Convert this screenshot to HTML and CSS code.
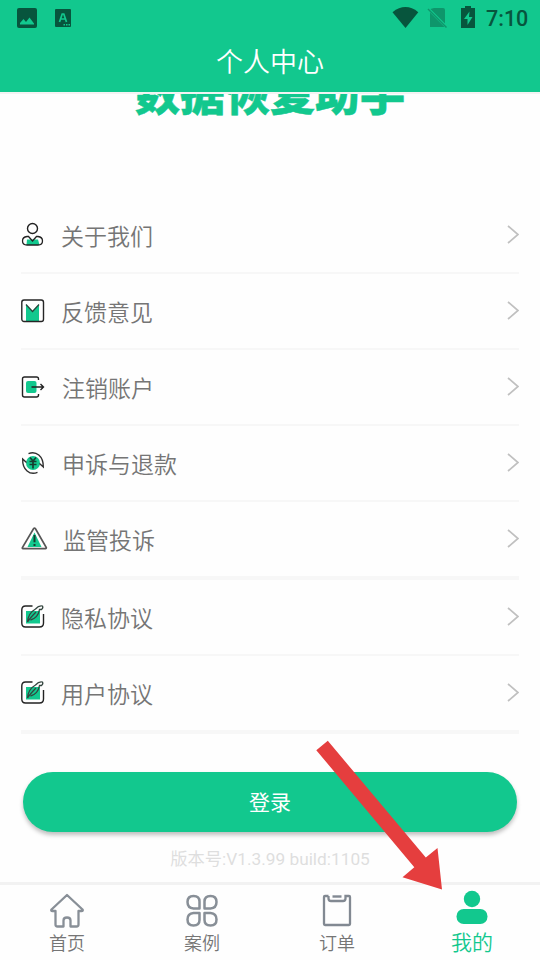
FILE: index.html
```html
<!DOCTYPE html>
<html lang="zh-CN">
<head>
<meta charset="utf-8">
<title>个人中心</title>
<link rel="stylesheet" href="styles.css">
</head>
<body>
<svg class="defs" width="0" height="0">
  <symbol id="chevron" viewBox="0 0 12 20"><path d="M1 1 11 9.500 1 18" fill="none" stroke="#c0c0c0" stroke-width="1.700"/></symbol>
  <symbol id="edit" viewBox="0 0 28 26">
    <rect x="5" y="7" width="14" height="12.500" fill="#12c88e"/>
    <path d="M11.500 2H4.500Q.8 2 .8 6V19Q.8 23 4.500 23H18.500Q22.500 23 22.500 19V10" fill="none" stroke="#222" stroke-width="1.400"/>
    <path d="M6.500 18C7 11 11 7 14.500 5Q18 1 21.500 2Q22.500 4 20.500 5.500L18.500 5.500Q17 14 9.500 16M6.500 18C9 14 12 11 15 8" fill="none" stroke="#34453f" stroke-width="1.300"/>
  </symbol>
</svg>
<div class="phone">
  <header class="header">
    <div class="status">
      <svg width="80" height="36" viewBox="0 0 80 36">
        <rect x="17" y="8" width="20" height="20" rx="2" fill="#07553d"/>
        <path d="M20 24.500V23l3.500-4 2.500 3 3.500-4.500 4.500 6v1z" fill="#12c88e"/>
        <rect x="55" y="9" width="16" height="18" rx="1" fill="#07553d"/>
        <path d="M59.500 22 62.200 14h1.600l2.700 8M60.700 19h4.600" fill="none" stroke="#12c88e" stroke-width="1.700"/>
        <path d="M63.500 24.800h7" stroke="#12c88e" stroke-width="1.500" stroke-dasharray="1.500 1"/>
      </svg>
      <div class="status-right">
        <svg width="90" height="36" viewBox="390 0 90 36">
          <path d="M392.500 12.200Q405.500 2 418.300 12.200L405.500 28z" fill="#07553d"/>
          <path d="M434 8h9q2 0 2 2v13.500L430.500 9zM430 12.500V27h14.500z" fill="#0e966b"/>
          <path d="M428 9l18.500 18.500" stroke="#0e966b" stroke-width="1.500"/>
          <path d="M465 6h6v2h4v20h-14V8h4z" fill="#07553d"/>
          <path d="M469.500 11.500 464 19h3.500v6l5-8H469z" fill="#12c88e"/>
        </svg>
        <span class="clock">7:10</span>
      </div>
    </div>
    <h1 class="title">个人中心</h1>
  </header>
  <main class="content">
    <div class="brand"><span class="brand-name">数据恢复助手</span></div>
    <ul class="menu">
      <li class="row">
        <svg class="icon" viewBox="0 0 28 26"><circle cx="11.500" cy="6.500" r="5" fill="none" stroke="#222" stroke-width="1.400"/><path d="M6 17.500h11l1.500 5.500h-13z" fill="#12c88e"/><path d="M7.500 14.500H6Q1.500 15 1.500 19T6 23H17Q21.500 23 21.500 19T17 14.500H15.500L11.500 19 7.500 14.500Z" fill="none" stroke="#222" stroke-width="1.300"/></svg>
        <span class="label">关于我们</span><svg class="chevron"><use href="#chevron"/></svg>
      </li>
      <li class="row">
        <svg class="icon" viewBox="0 0 28 26"><path d="M5 6.500 11.500 13.500 18 6.500V23H5z" fill="#12c88e"/><rect x=".8" y="2" width="21.700" height="21.500" rx="2.200" fill="none" stroke="#252525" stroke-width="1.400"/><path d="M5 6.500 11.500 13.500 18 6.500" fill="none" stroke="#25463b" stroke-width="1.300"/></svg>
        <span class="label">反馈意见</span><svg class="chevron"><use href="#chevron"/></svg>
      </li>
      <li class="row">
        <svg class="icon" viewBox="0 0 28 26"><rect x="5" y="7" width="10.500" height="12" rx="2" fill="#12c88e"/><path d="M17.500 6V5Q17.500 3 15.500 3H3.500Q1.500 3 1.500 5V21Q1.500 23 3.500 23H15.500Q17.500 23 17.500 21V20M10.500 13H22M19.500 10 22.500 13 19.500 16" fill="none" stroke="#222" stroke-width="1.400"/></svg>
        <span class="label nudge-1">注销账户</span><svg class="chevron"><use href="#chevron"/></svg>
      </li>
      <li class="row">
        <svg class="icon" viewBox="0 0 28 26"><circle cx="12" cy="13" r="7" fill="#12c88e"/><path d="M7.500 3.600C15 .5 22.500 6 22.300 17L18.500 13.500M16.500 22.400C9 25.500 1.200 20 1.700 9L5.500 12.500" fill="none" stroke="#303030" stroke-width="1.400"/><path d="M9 7.500 12 11 15 7.500M12 11V18.500M8.500 11.500h7M8.500 14.500h7" fill="none" stroke="#173d30" stroke-width="1.700"/></svg>
        <span class="label nudge-1">申诉与退款</span><svg class="chevron"><use href="#chevron"/></svg>
      </li>
      <li class="row row-end">
        <svg class="icon" viewBox="0 0 28 26"><path d="M13.500 6.500 20.500 21H6.500z" fill="#12c88e"/><path d="M12.500 2.800Q13.500 1.600 14.500 2.800L25.300 21.500Q25.500 22.700 24.500 22.700H2Q1 22.700 1.400 21.500Z" fill="none" stroke="#565656" stroke-width="1.700"/><path d="M13.500 9V16.200M13.500 18v2" stroke="#173d30" stroke-width="2"/></svg>
        <span class="label nudge-2">监管投诉</span><svg class="chevron"><use href="#chevron"/></svg>
      </li>
      <li class="row">
        <svg class="icon"><use href="#edit"/></svg><span class="label">隐私协议</span><svg class="chevron"><use href="#chevron"/></svg>
      </li>
      <li class="row row-end">
        <svg class="icon"><use href="#edit"/></svg><span class="label">用户协议</span><svg class="chevron"><use href="#chevron"/></svg>
      </li>
    </ul>
    <button class="login">登录</button>
    <p class="version">版本号:V1.3.99 build:1105</p>
  </main>
  <nav class="tabs">
    <a class="tab"><svg width="40" height="40" viewBox="0 0 40 40"><path d="M20 5 4.500 19.500Q3.500 21 5.500 21H8.500V34.500Q8.500 36.500 10.500 36.500H16.500V30.500Q16.500 27.500 20 27.500T23.500 30.500V36.500H29.500Q31.500 36.500 31.500 34.500V21H34.500Q36.500 21 35.500 19.500Z" fill="none" stroke="#888f97" stroke-width="2.300" stroke-linejoin="round"/></svg><span>首页</span></a>
    <a class="tab"><svg width="40" height="40" viewBox="0 0 40 40"><path d="M17.500 18.500V11.500Q17.500 6 11.500 6T5.500 12 11.500 18.500ZM22.500 18.500V11.500Q22.500 6 28.500 6T34.500 12 28.500 18.500ZM17.500 23V30Q17.500 35.500 11.500 35.500T5.500 29.500 11.500 23ZM22.500 23V30Q22.500 35.500 28.500 35.500T34.500 29.500 28.500 23Z" fill="none" stroke="#888f97" stroke-width="2.500" stroke-linejoin="round"/></svg><span>案例</span></a>
    <a class="tab"><svg width="40" height="40" viewBox="0 0 40 40"><path d="M11.500 6H8Q7 6 7 7V34Q7 35 8 35H32Q33 35 33 34V7Q33 6 32 6H28.500V8.500Q28.500 11 26 11H14Q11.500 11 11.500 8.500V6" fill="none" stroke="#828992" stroke-width="2.300"/><path d="M15.500 6.500h9" stroke="#828992" stroke-width="2.400"/></svg><span>订单</span></a>
    <a class="tab tab-active"><svg width="40" height="40" viewBox="0 0 40 40"><circle cx="20" cy="12" r="8.200" fill="#12c88e"/><rect x="4.500" y="22" width="31" height="15" rx="7.200" fill="#12c88e"/></svg><span>我的</span></a>
  </nav>
  <svg class="pointer" width="130" height="152" viewBox="0 0 130 152"><path d="M6.300 10.200 17.800.8 115.800 117.500 127.500 108 132 149.500 92.500 137.200 104.300 127.300Z" fill="#e53e3e"/></svg>
</div>
</body>
</html>
```

FILE: styles.css
```css
* { box-sizing: border-box; }
body { margin: 0; background: #fefefe; font-family: Roboto, "Noto Sans CJK SC", sans-serif; }
.defs { position: absolute; }
.phone { position: relative; width: 540px; height: 960px; overflow: hidden; display: flex; flex-direction: column; }
.header { height: 92px; flex: none; background: #12c88e; color: #fff; }
.status { height: 36px; display: flex; justify-content: space-between; }
.status-right { display: flex; padding-right: 12px; }
.status-right svg { margin-right: 6px; }
.clock { width: 42px; color: #07553d; font-size: 21.5px; font-weight: 500; line-height: 38px; }
.title { margin: 0; font-size: 27px; font-weight: 350; line-height: 55px; text-align: center; }
.content { flex: 1; display: flex; flex-direction: column; }
.brand { height: 106px; border-top: 2px solid #f3f3f3; overflow: hidden; text-align: center; }
.brand-name { display: block; margin-top: -21px; color: #12c88e; font-size: 45px; line-height: 46px; font-weight: 900; -webkit-text-stroke: .5px #12c88e; }
.menu { list-style: none; margin: 0; padding: 0 21px; }
.row { height: 76px; display: flex; align-items: center; border-bottom: 2px solid #f7f7f7; color: #757575; font-size: 23px; line-height: 34px; }
.row-end { height: 78px; border-bottom-width: 4px; }
.icon { width: 28px; height: 26px; margin-right: 12px; }
.label { flex: 1; padding-top: 5px; font-weight: 350; }
.nudge-1 { padding-left: 1px; }
.nudge-2 { padding-left: 2px; }
.chevron { width: 12px; height: 20px; }
.login { flex: none; height: 60px; margin: 38px 23px 0; padding: 0 0 2px; border: 0; border-radius: 30px; background: #12c88e; color: #fff; font: 21px Roboto, "Noto Sans CJK SC", sans-serif; box-shadow: 0 3px 4px rgba(0, 0, 0, .25); }
.version { margin: 14px 0 0; color: #dedede; font-size: 17.3px; line-height: 26px; text-align: center; }
.tabs { height: 78px; flex: none; display: grid; grid-template-columns: repeat(4, 135px); border-top: 3px solid #f2f2f2; }
.tab { display: flex; flex-direction: column; align-items: center; padding: 5px 1px 0 0; color: #757575; font-size: 18px; font-weight: 350; line-height: 28px; }
.tab svg { flex: none; }
.tab-active { color: #12c88e; font-size: 21px; padding-top: 2px; line-height: 32px; }
.pointer { position: absolute; left: 310px; top: 740px; overflow: visible; }
```
